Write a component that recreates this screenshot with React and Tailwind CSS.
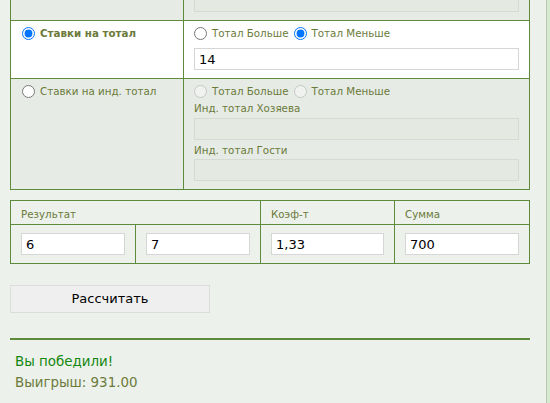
import React from 'react';

const FONT = { fontFamily: '"DejaVu Sans", Verdana, sans-serif' };

function Field({ value, disabled, className = '' }) {
    return (
        <input
            type="text"
            readOnly
            disabled={disabled}
            value={value || ''}
            className={`block h-[22px] w-full border px-[4px] text-[13px] outline-none ${disabled ? 'border-[#d5dad3] bg-[#e4e9e2]' : 'border-[#d6d6d6] bg-white text-black'} ${className}`}
        />
    );
}

function Radio({ checked, disabled, name }) {
    return (
        <input
            type="radio"
            name={name}
            checked={!!checked}
            disabled={disabled}
            readOnly
            className="m-0 mr-[5px] h-[13px] w-[13px] shrink-0"
        />
    );
}

export default function App() {
    return (
        <div className="flex h-[403px] w-[550px] overflow-hidden bg-[#ecf1eb] text-[#6b7a3a]" style={FONT}>
            <div className="w-[546px] shrink-0 pl-[10px]">
                {/* bet type table */}
                <div className="grid w-[520px] grid-cols-[173px_345px] border-x border-b border-[#5e8a3c] text-[10.3px] leading-[13px]">
                    <div className="h-[21px] border-r border-b border-[#5e8a3c] bg-[#e6ebe5]" />
                    <div className="h-[21px] overflow-hidden border-b border-[#5e8a3c] bg-[#e6ebe5] px-[10px]">
                        <div className="-mt-[10px]">
                            <Field disabled />
                        </div>
                    </div>

                    <div className="border-r border-b border-[#5e8a3c] bg-white px-[11px] pt-[6px]">
                        <label className="flex items-center font-bold">
                            <Radio name="type" checked />
                            Ставки на тотал
                        </label>
                    </div>
                    <div className="border-b border-[#5e8a3c] bg-white px-[10px] pt-[6px] pb-[8px]">
                        <div className="flex items-center">
                            <Radio name="tot" />
                            <span className="mr-[5px]">Тотал Больше</span>
                            <Radio name="tot" checked />
                            <span>Тотал Меньше</span>
                        </div>
                        <Field value="14" className="mt-[8px]" />
                    </div>

                    <div className="border-r border-[#5e8a3c] bg-[#e6ebe5] px-[11px] pt-[6px]">
                        <label className="flex items-center">
                            <Radio name="type" />
                            Ставки на инд. тотал
                        </label>
                    </div>
                    <div className="bg-[#e6ebe5] px-[10px] pt-[6px] pb-[8px]">
                        <div className="flex items-center">
                            <Radio name="ind" disabled />
                            <span className="mr-[5px]">Тотал Больше</span>
                            <Radio name="ind" disabled />
                            <span>Тотал Меньше</span>
                        </div>
                        <div className="mt-[3px] leading-[14px]">Инд. тотал Хозяева</div>
                        <Field disabled className="mt-[3px]" />
                        <div className="mt-[3px] leading-[14px]">Инд. тотал Гости</div>
                        <Field disabled className="mt-[2px]" />
                    </div>
                </div>

                {/* result table */}
                <div className="mt-[10px] grid w-[520px] grid-cols-[125px_125px_134px_134px] border border-[#5e8a3c] text-[10.3px]">
                    <div className="col-span-2 h-[24px] border-r border-b border-[#5e8a3c] pl-[10px] pt-[6px]">Результат</div>
                    <div className="h-[24px] border-r border-b border-[#5e8a3c] pl-[10px] pt-[6px]">Коэф-т</div>
                    <div className="h-[24px] border-b border-[#5e8a3c] pl-[10px] pt-[6px]">Сумма</div>
                    <div className="border-r border-[#5e8a3c] px-[10px] py-[8px]"><Field value="6" /></div>
                    <div className="border-r border-[#5e8a3c] px-[10px] py-[8px]"><Field value="7" /></div>
                    <div className="border-r border-[#5e8a3c] px-[10px] py-[8px]"><Field value="1,33" /></div>
                    <div className="px-[10px] py-[8px]"><Field value="700" /></div>
                </div>

                <button className="mt-[21px] h-[28px] w-[200px] border border-[#dcdcdc] bg-[#efefef] text-[13px] text-black">
                    Рассчитать
                </button>

                <div className="mt-[25px] h-[2px] w-[520px] bg-[#5e8a3c]" />

                <div className="pl-[5px] pt-[11px] text-[13.4px] leading-[21px]">
                    <div className="text-[#13870f]">Вы победили!</div>
                    <div>Выигрыш: 931.00</div>
                </div>
            </div>
            <div className="w-[4px] shrink-0 border-l border-[#b9c7b4] bg-[#d6ead0]" />
        </div>
    );
}
